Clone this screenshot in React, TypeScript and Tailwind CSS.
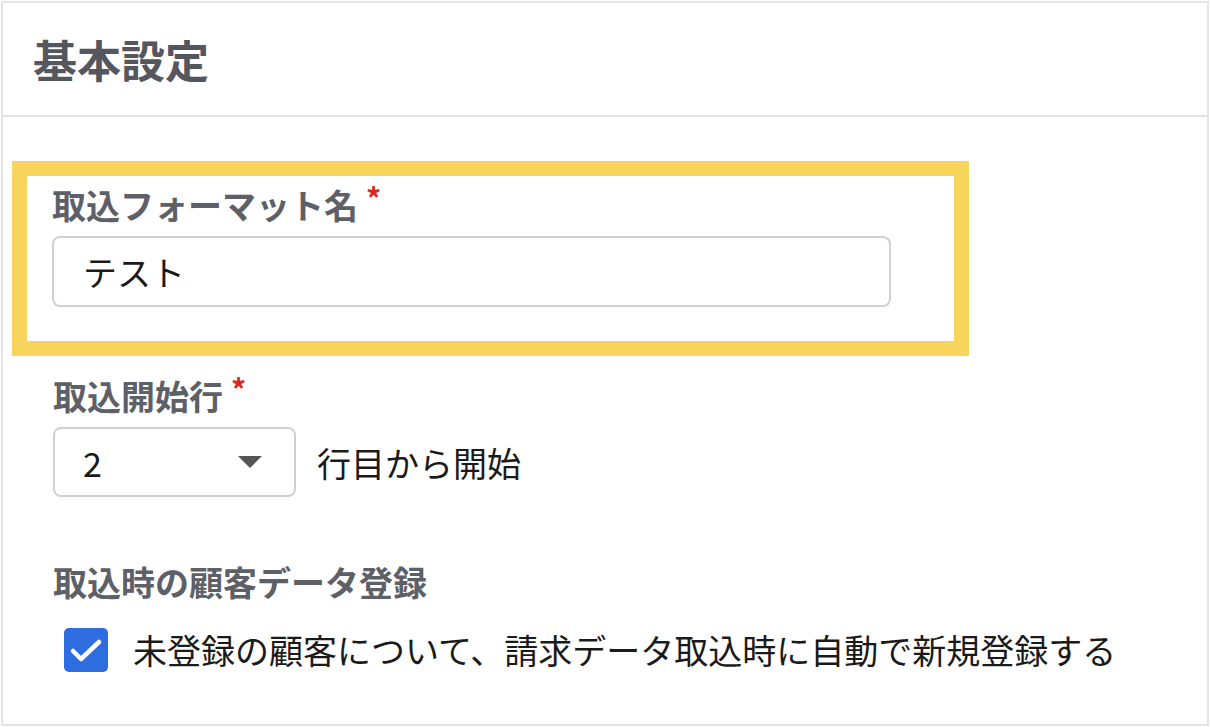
import React from 'react';

const font = { fontFamily: '"Noto Sans CJK JP", "Noto Sans", sans-serif' };

const Required: React.FC = () => (
  <span className="ml-[8px] text-[30px] leading-none font-bold text-[#e0261b] relative top-[-8px]">*</span>
);

const FieldLabel: React.FC<{ text: string; required?: boolean }> = ({ text, required }) => (
  <div className="flex items-center h-[40px] text-[34px] font-bold text-[#5e6068] leading-[40px]">
    <span>{text}</span>
    {required && <Required />}
  </div>
);

export default function App() {
  return (
    <div className="w-[1210px] h-[727px] bg-white p-[1px]" style={font}>
      <div className="w-full h-full border-2 border-[#e4e4e4] flex flex-col">
        <div className="h-[114px] shrink-0 border-b-2 border-[#e2e2e2] flex items-center pl-[30px]">
          <h1 className="text-[44px] font-bold text-[#55575f] leading-none">基本設定</h1>
        </div>

        <div className="flex flex-col pl-[9px] pt-[44px]">
          {/* highlighted field */}
          <div className="w-[957px] border-[15px] border-[#f7d55c] pl-[25px] pt-[9px] pb-[34px]">
            <FieldLabel text="取込フォーマット名" required />
            <div className="mt-[11px] w-[839px] h-[71px] border-2 border-[#d0d0d0] rounded-[8px] flex items-center pl-[29px] text-[34px] text-[#1a1a1a]">
              テスト
            </div>
          </div>

          <div className="pl-[41px]">
            <div className="mt-[20px]">
              <FieldLabel text="取込開始行" required />
            </div>
            <div className="mt-[11px] flex items-center gap-[21px]">
              <div className="w-[243px] h-[70px] border-2 border-[#d0d0d0] rounded-[8px] flex items-center justify-between pl-[28px] pr-[32px] text-[34px] text-[#1a1a1a]">
                <span>2</span>
                <svg width="24" height="12" viewBox="0 0 24 12">
                  <path d="M0 0H24L12 12Z" fill="#555555" />
                </svg>
              </div>
              <span className="text-[34px] text-[#1a1a1a]">行目から開始</span>
            </div>

            <div className="mt-[65px]">
              <FieldLabel text="取込時の顧客データ登録" />
            </div>
            <div className="mt-[26px] flex items-center gap-[25px] pl-[11px]">
              <div className="w-[44px] h-[44px] rounded-[5px] bg-[#2d6de0] flex items-center justify-center shrink-0">
                <svg width="36" height="36" viewBox="0 0 36 36" fill="none">
                  <path d="M5 19L13 27L31 10" stroke="#ffffff" strokeWidth="4.5" strokeLinecap="round" strokeLinejoin="round" />
                </svg>
              </div>
              <span className="text-[34px] text-[#1a1a1a] leading-[44px]">
                未登録の顧客について、請求データ取込時に自動で新規登録する
              </span>
            </div>
          </div>
        </div>
      </div>
    </div>
  );
}
